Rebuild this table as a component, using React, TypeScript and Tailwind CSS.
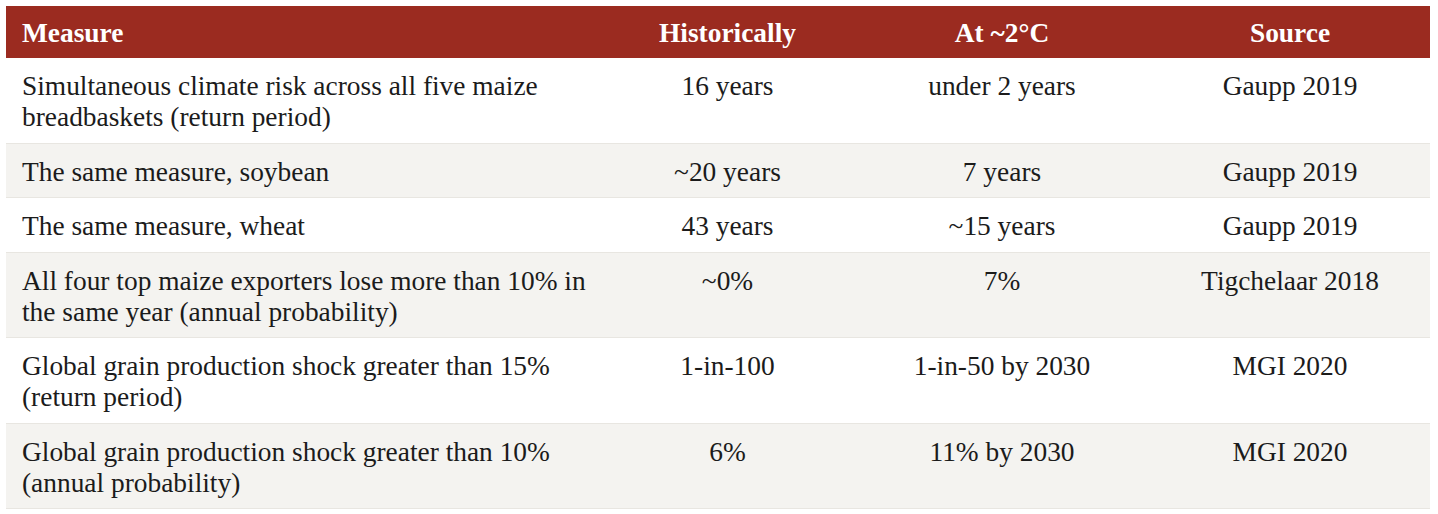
import React from "react";

type Row = { m: React.ReactNode; h: string; a: string; s: string; gray: boolean };

const rows: Row[] = [
  {
    m: (
      <>
        Simultaneous climate risk across all five maize
        <br />
        breadbaskets (return period)
      </>
    ),
    h: "16 years",
    a: "under 2 years",
    s: "Gaupp 2019",
    gray: false,
  },
  { m: "The same measure, soybean", h: "~20 years", a: "7 years", s: "Gaupp 2019", gray: true },
  { m: "The same measure, wheat", h: "43 years", a: "~15 years", s: "Gaupp 2019", gray: false },
  {
    m: (
      <>
        All four top maize exporters lose more than 10% in
        <br />
        the same year (annual probability)
      </>
    ),
    h: "~0%",
    a: "7%",
    s: "Tigchelaar 2018",
    gray: true,
  },
  {
    m: (
      <>
        Global grain production shock greater than 15%
        <br />
        (return period)
      </>
    ),
    h: "1-in-100",
    a: "1-in-50 by 2030",
    s: "MGI 2020",
    gray: false,
  },
  {
    m: (
      <>
        Global grain production shock greater than 10%
        <br />
        (annual probability)
      </>
    ),
    h: "6%",
    a: "11% by 2030",
    s: "MGI 2020",
    gray: true,
  },
];

export default function App() {
  return (
    <div className="min-h-[514px] w-[1438px] bg-white pl-[6px] pt-[6px] font-['Liberation_Serif','Times_New_Roman',serif] text-[27.4px] leading-[31px] text-[#1b1b1b]">
      <div className="w-[1424px]">
        <div className="grid grid-cols-[595px_253px_296px_280px] bg-[#9b2b20] font-bold text-white">
          <div className="pt-[11.5px] pb-[9.5px] pl-4">Measure</div>
          <div className="pt-[11.5px] pb-[9.5px] text-center">Historically</div>
          <div className="pt-[11.5px] pb-[9.5px] text-center">At ~2°C</div>
          <div className="pt-[11.5px] pb-[9.5px] text-center">Source</div>
        </div>
        {rows.map((r, i) => (
          <div
            key={i}
            className={`grid grid-cols-[595px_253px_296px_280px] border-b border-[#e8e6e1] ${
              r.gray ? "bg-[#f4f3f0]" : "bg-white"
            }`}
          >
            <div className="whitespace-nowrap pt-[13px] pb-[9.5px] pl-4">{r.m}</div>
            <div className="pt-[13px] pb-[9.5px] text-center">{r.h}</div>
            <div className="pt-[13px] pb-[9.5px] text-center">{r.a}</div>
            <div className="pt-[13px] pb-[9.5px] text-center">{r.s}</div>
          </div>
        ))}
      </div>
    </div>
  );
}
